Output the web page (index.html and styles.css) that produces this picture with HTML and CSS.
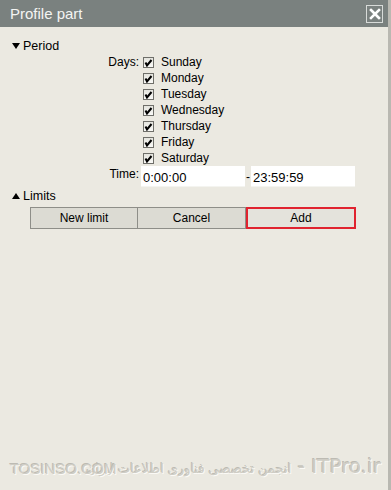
FILE: index.html
```html
<!DOCTYPE html>
<html lang="en">
<head>
  <meta charset="UTF-8">
  <meta name="viewport" content="width=device-width, initial-scale=1.0">
  <title>Profile part</title>
  <link rel="stylesheet" href="styles.css">
</head>
<body>
  <div class="dialog">
    <div class="titlebar">
      <span class="title">Profile part</span>
      <button class="close-btn" aria-label="Close">
        <svg width="12" height="12" viewBox="0 0 12 12"><path d="M2 2 L10 10 M10 2 L2 10" stroke="#fff" stroke-width="2.6" stroke-linecap="square"/></svg>
      </button>
    </div>

    <div class="content">
      <div class="section-head">
        <span class="arrow-down"></span>
        <span>Period</span>
      </div>

      <div class="period-form">
        <div class="field-label days-label">Days:</div>
        <div class="days">
          <label class="day"><span class="check"><svg width="9" height="9" viewBox="0 0 9 9"><path d="M1.5 4.5 L3 7.5 L7.5 2" fill="none" stroke="#000" stroke-width="2"/></svg></span>Sunday</label>
          <label class="day"><span class="check"><svg width="9" height="9" viewBox="0 0 9 9"><path d="M1.5 4.5 L3 7.5 L7.5 2" fill="none" stroke="#000" stroke-width="2"/></svg></span>Monday</label>
          <label class="day"><span class="check"><svg width="9" height="9" viewBox="0 0 9 9"><path d="M1.5 4.5 L3 7.5 L7.5 2" fill="none" stroke="#000" stroke-width="2"/></svg></span>Tuesday</label>
          <label class="day"><span class="check"><svg width="9" height="9" viewBox="0 0 9 9"><path d="M1.5 4.5 L3 7.5 L7.5 2" fill="none" stroke="#000" stroke-width="2"/></svg></span>Wednesday</label>
          <label class="day"><span class="check"><svg width="9" height="9" viewBox="0 0 9 9"><path d="M1.5 4.5 L3 7.5 L7.5 2" fill="none" stroke="#000" stroke-width="2"/></svg></span>Thursday</label>
          <label class="day"><span class="check"><svg width="9" height="9" viewBox="0 0 9 9"><path d="M1.5 4.5 L3 7.5 L7.5 2" fill="none" stroke="#000" stroke-width="2"/></svg></span>Friday</label>
          <label class="day"><span class="check"><svg width="9" height="9" viewBox="0 0 9 9"><path d="M1.5 4.5 L3 7.5 L7.5 2" fill="none" stroke="#000" stroke-width="2"/></svg></span>Saturday</label>
        </div>

        <div class="field-label time-label">Time:</div>
        <div class="time-row">
          <input type="text" class="time-input" value="0:00:00">
          <span class="dash">-</span>
          <input type="text" class="time-input" value="23:59:59">
        </div>
      </div>

      <div class="section-head limits-head">
        <span class="arrow-up"></span>
        <span>Limits</span>
      </div>

      <div class="buttons">
        <button class="btn">New limit</button>
        <button class="btn">Cancel</button>
        <button class="btn btn-marked">Add</button>
      </div>
    </div>

    <div class="watermark">
      <span class="wm-main"><span class="wm-fa">انجمن تخصصی فناوری اطلاعات ایران</span> - ITPro.ir</span>
      <span class="wm-site">TOSINSO.COM</span>
    </div>
  </div>
</body>
</html>
```

FILE: styles.css
```css
/* General styles */
body {
  margin: 0;
  padding: 0;
  font-family: "Liberation Sans", Arial, sans-serif;
  font-size: 12px;
  color: #000;
  background: #ebe9e1;
}

.dialog {
  position: relative;
  height: 490px;
  background: #ebe9e1;
  border-right: 3px solid #b9b8b1;
  box-sizing: border-box;
}

.titlebar {
  height: 27px;
  background: #7a817f;
  display: flex;
  align-items: center;
  justify-content: space-between;
  padding: 0 5px 0 10px;
}

.title {
  color: #f4f4f2;
  font-size: 15px;
}

.close-btn {
  width: 17px;
  height: 18px;
  padding: 0;
  margin-top: 1px;
  border: 1px solid #d8dbd9;
  background: transparent;
  display: flex;
  align-items: center;
  justify-content: center;
}

.content {
  padding: 11px 0 0 12px;
}

.section-head {
  display: flex;
  align-items: center;
  gap: 3px;
  height: 16px;
  font-size: 12.5px;
}

.arrow-down {
  width: 0;
  height: 0;
  border-left: 4.5px solid transparent;
  border-right: 4.5px solid transparent;
  border-top: 6px solid #000;
}

.arrow-up {
  width: 0;
  height: 0;
  border-left: 4.5px solid transparent;
  border-right: 4.5px solid transparent;
  border-bottom: 6px solid #000;
}

.period-form {
  display: grid;
  grid-template-columns: 129px auto;
}

.field-label {
  text-align: right;
  padding-right: 2px;
}

.days-label {
  line-height: 16px;
}

.days {
  display: flex;
  flex-direction: column;
}

.day {
  display: flex;
  align-items: center;
  height: 16px;
  gap: 7px;
}

.check {
  width: 9px;
  height: 9px;
  margin-left: 2px;
  border: 1px solid #6f6f6a;
  background: linear-gradient(#e4e4de, #fafaf7);
  display: flex;
  align-items: center;
  justify-content: center;
}

.time-label {
  padding-top: 1px;
}

.time-row {
  display: flex;
  align-items: center;
}

.time-input {
  width: 104px;
  height: 21px;
  box-sizing: border-box;
  border: none;
  border-bottom: 1px solid #f4f4f0;
  background: #fff;
  padding: 2px 2px 0;
  font-family: "Liberation Sans", Arial, sans-serif;
  font-size: 13px;
  color: #000;
}

.dash {
  width: 6px;
  text-align: center;
}

.limits-head {
  margin-top: 1px;
}

.buttons {
  display: flex;
  margin: 3px 0 0 18px;
  width: 325px;
}

.btn {
  height: 22px;
  box-sizing: border-box;
  background: #dcdbd3;
  border: 1px solid #8e8e88;
  border-left-width: 0;
  font-family: "Liberation Sans", Arial, sans-serif;
  font-size: 12px;
  color: #000;
  padding: 0;
  flex: 0 0 108px;
}

.btn:first-child {
  border-left-width: 1px;
}

.btn-marked {
  flex-basis: 110px;
  border: 2px solid #e0232f;
  background: #e4e3dc;
}

/* Watermark over the bottom of the dialog */
.watermark {
  position: absolute;
  left: 8px;
  right: 7px;
  top: 454px;
  height: 28px;
  white-space: nowrap;
}

.wm-main {
  position: absolute;
  right: 0;
  top: 0;
  font-family: "DejaVu Sans", "Liberation Sans", sans-serif;
  font-size: 20px;
  color: #cfcdc5;
  text-shadow: 1px 1px 0 #fbfaf6, -1px -1px 0 #bdbbb3;
}

.wm-fa {
  font-size: 13px;
}

.wm-site {
  position: absolute;
  left: 2px;
  top: 6px;
  font-family: "Liberation Sans", Arial, sans-serif;
  font-size: 15px;
  color: #cfcdc5;
  text-shadow: 1px 1px 0 #fbfaf6, -1px -1px 0 #bdbbb3;
}
```
